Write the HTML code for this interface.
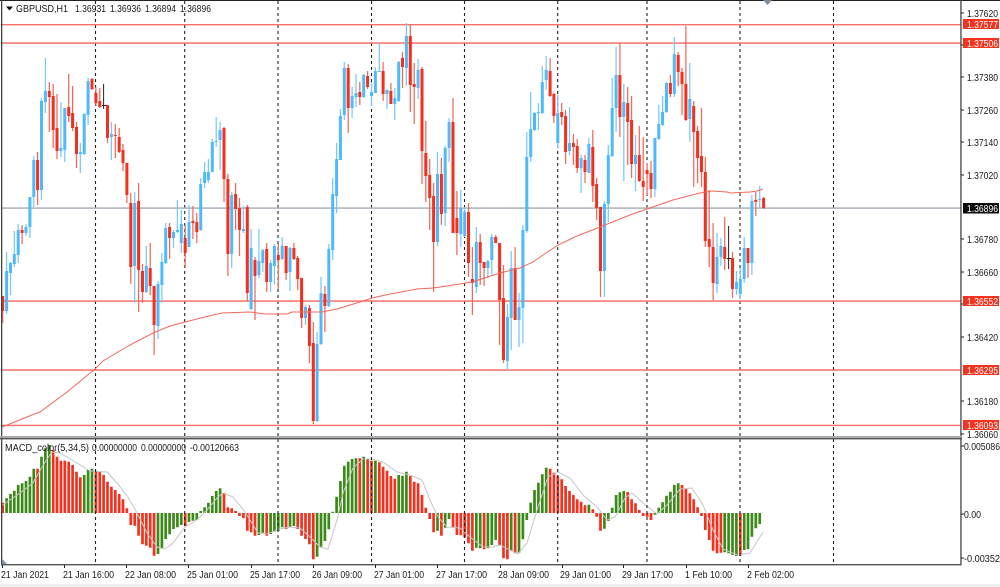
<!DOCTYPE html>
<html>
<head>
<meta charset="utf-8">
<style>
html,body{margin:0;padding:0;background:#fff;width:1000px;height:587px;overflow:hidden}
svg{display:block;position:absolute;left:0;top:0;filter:blur(.3px)}
text{font-family:"Liberation Sans",sans-serif;font-size:10px;fill:#1a1a1a}
.w{fill:#fff}
</style>
</head>
<body>
<svg width="1000" height="587" viewBox="0 0 1000 587" xmlns="http://www.w3.org/2000/svg">
<rect width="1000" height="587" fill="#fff"/>
<rect y="584" width="1000" height="3" fill="#efefef"/>

<!-- MACD bars -->
<path fill="none" stroke="#3b8a18" stroke-width="2.7" d="M6.6 513V498.3M10.5 513V494M14.3 513V490.7M18.2 513V485M22.1 513V483.3M26 513V481M29.9 513V476.7M33.8 513V468.7M41.5 513V456.7M45.4 513V448.3M49.3 513V445M84.2 513V475M88.1 513V470M92 513V468.7M158 513V554M161.9 513V548.7M165.7 513V539M169.6 513V534.3M173.5 513V529M177.4 513V527.3M181.3 513V525M189 513V522M192.9 513V520.7M196.8 513V520M200.7 513V511M204.6 513V507.3M208.4 513V502.7M212.3 513V496M216.2 513V491M220.1 513V488.3M258.9 513V535M262.8 513V532.7M270.6 513V534M274.4 513V531.7M278.3 513V531M282.2 513V527.3M290 513V526.7M293.9 513V526M317.1 513V556.7M321 513V546.7M324.9 513V541M328.8 513V529.3M332.7 513V511.7M336.6 513V496.7M340.4 513V481M344.3 513V465.7M348.2 513V461.7M352.1 513V459M356 513V458.3M363.7 513V456.7M375.4 513V460.7M398.7 513V475M402.5 513V475.7M406.4 513V471.7M437.5 513V530.7M445.2 513V527.7M449.1 513V519M476.3 513V547.7M480.2 513V548.3M487.9 513V548.3M491.8 513V545M495.7 513V540M511.2 513V550.7M519 513V552.7M522.9 513V539.3M526.8 513V520M530.7 513V502.7M534.5 513V490M538.4 513V482.7M542.3 513V474.3M546.2 513V467.7M588.9 513V504.7M604.4 513V528.7M608.3 513V521M612.2 513V507.7M616.1 513V495M619.9 513V492.3M623.8 513V491M654.9 513V514.7M658.8 513V507.7M662.6 513V502.3M666.5 513V495.7M670.4 513V491.7M674.3 513V485M678.2 513V483.3M724.7 513V552.3M728.6 513V553.3M732.5 513V555M736.4 513V556M744.2 513V550M748 513V549.3M751.9 513V536.7M755.8 513V528.3M759.7 513V524"/>
<path fill="none" stroke="#f5301c" stroke-width="2.7" d="M2.7 513V502.7M37.6 513V468.7M53.2 513V450M57 513V456.7M60.9 513V460.7M64.8 513V460.7M68.7 513V461.7M72.6 513V465M76.5 513V471.7M80.3 513V477.3M95.9 513V470.7M99.8 513V471.7M103.6 513V475M107.5 513V481.7M111.4 513V486.7M115.3 513V490M119.2 513V494M123 513V499.3M126.9 513V508.3M130.8 513V525M134.7 513V525.7M138.6 513V535.7M142.5 513V544.3M146.3 513V545.7M150.2 513V547.7M154.1 513V555.7M185.2 513V526M224 513V492.7M227.9 513V507.3M231.7 513V508.3M235.6 513V511M239.5 513V516M243.4 513V518.3M247.3 513V530.7M251.1 513V532.3M255 513V535.7M266.7 513V535.7M286.1 513V529M297.7 513V529M301.6 513V535.7M305.5 513V539M309.4 513V544.3M313.3 513V559.3M359.8 513V458.3M367.6 513V459M371.5 513V460.7M379.3 513V462.3M383.1 513V466.7M387 513V470.7M390.9 513V476M394.8 513V478.7M410.3 513V476M414.2 513V481.7M418.1 513V483.3M422 513V495M425.8 513V507.7M429.7 513V519M433.6 513V532.3M441.4 513V535.7M453 513V527.7M456.9 513V535M460.8 513V535.3M464.7 513V537.3M468.5 513V543.3M472.4 513V550.7M484.1 513V549.3M499.6 513V545M503.5 513V558.3M507.4 513V559.3M515.1 513V553.3M550.1 513V468.7M553.9 513V472.7M557.8 513V475.7M561.7 513V479.3M565.6 513V486M569.5 513V491M573.4 513V495M577.2 513V499.3M581.1 513V501.7M585 513V505.3M592.8 513V509.3M596.6 513V516.7M600.5 513V530.7M627.7 513V492M631.6 513V499.3M635.5 513V503.3M639.3 513V510M643.2 513V516M647.1 513V516.7M651 513V520M682 513V485M685.9 513V489M689.8 513V493.3M693.7 513V499.3M697.6 513V507.3M701.5 513V516M705.3 513V530M709.2 513V540M713.1 513V550.7M717 513V553.3M720.9 513V552.7M740.3 513V555.7"/>
<path fill="none" stroke="#c6c6c6" stroke-width="1" d="M2.7 505L20 493L33 483L45 462L52 452L60 453L77 463L90 471L107 472L117 483L128 497L137 513L147 533L157 547L165 549L173 543L185 527L197 520L207 510L217 498L223 493L233 497L245 512L250 520L258 533L267 534L280 529L290 527L300 528L310 537L320 547L328 549L337 520L343 493L353 468L363 459L372 459L383 462L397 472L410 475L422 480L430 500L438 517L447 527L460 528L470 537L483 547L492 547L500 545L518 554L527 543L538 507L548 477L558 472L570 478L583 495L597 507L607 520L615 517L625 498L632 493L643 503L657 514L667 505L680 489L692 488L703 505L713 530L723 549L737 555L750 553L763 532"/>

<!-- vertical separators -->
<path fill="none" stroke="#222" stroke-width="1.1" stroke-dasharray="3 3" d="M95.5 1V565M184.7 1V565M278 1V565M371.5 1V565M464.5 1V565M557.7 1V565M647 1V565M740 1V565M833.5 1V565"/>

<!-- horizontal lines -->
<rect x="2" y="207.3" width="959" height="1.6" fill="#aeb6bf"/>
<g fill="#f9706a">
<rect x="2" y="24" width="959" height="1.4"/>
<rect x="2" y="42.3" width="959" height="1.5"/>
<rect x="2" y="300.3" width="959" height="1.5"/>
<rect x="2" y="369.3" width="959" height="1.5"/>
<rect x="2" y="424.7" width="959" height="1.4"/>
</g>

<!-- candle wicks -->
<path fill="none" stroke="#78c8fb" stroke-width="1.25" d="M6.6 252V314M10.5 262V295M14.3 231V267M18.2 224V263M26 224V236M29.9 197V238M33.8 156V207M41.5 98V200M45.4 58V113M60.9 102V157M64.8 108V162M80.3 143V173M84.2 113V155M88.1 78V125M111.4 122V160M134.7 192V303M146.3 246V293M158 281V339M161.9 253V303M165.7 223V264M173.5 230V248M177.4 200V233M181.3 210V253M189 205V247M200.7 178V231M204.6 162V188M208.4 159V183M212.3 139V172M216.2 117V147M220.1 122V170M231.7 192V268M243.4 206V233M251.1 229V310M258.9 229V278M262.8 249V272M270.6 260V292M274.4 244V285M282.2 237V260M290 247V291M305.5 305V325M317.1 332V422M321 277V345M328.8 244V307M332.7 178V260M336.6 143V213M340.4 109V160M344.3 62V120M352.1 87V118M356 74V107M363.7 74V98M371.5 82V106M375.4 67V93M379.3 43V72M387 89V109M394.8 88V120M398.7 61V102M406.4 23V86M418.1 59V99M437.5 152V246M445.2 146V226M449.1 118V162M460.8 190V247M464.7 207V237M476.3 227V293M487.9 260V278M491.8 234V275M507.4 304V370M511.2 251V350M519 293V347M522.9 225V343M526.8 132V233M530.7 92V162M534.5 112V131M538.4 103V130M542.3 66V114M546.2 56V90M557.8 95V148M569.5 107V155M581.1 155V193M588.9 138V173M604.4 201V297M608.3 145V222M612.2 78V157M616.1 47V132M623.8 84V181M635.5 135V191M654.9 138V197M658.8 105V140M662.6 96V126M666.5 82V113M674.3 37V97M689.8 63V142M717 233V293M720.9 238V266M736.4 271V295M740.3 268V299M744.2 237V283M751.9 195V275M759.7 186V208"/>
<path fill="none" stroke="#f4685a" stroke-width="1.25" d="M2.7 296V323M22.1 225V244M37.6 152V205M49.3 82V132M53.2 84V148M57 94V159M68.7 74V122M72.6 86V131M76.5 122V168M92 78V90M95.9 87V106M99.8 88V108M107.5 105V143M115.3 124V158M119.2 128V153M123 144V171M126.9 163V203M130.8 193V284M138.6 183V312M142.5 264V303M150.2 243V295M154.1 286V355M169.6 223V259M185.2 225V268M192.9 206V239M196.8 213V243M224 127V202M227.9 174V276M235.6 183V230M239.5 198V256M247.3 205V301M255 257V320M266.7 243V292M278.3 244V289M286.1 246V280M293.9 243V260M297.7 256V290M301.6 278V328M309.4 305V363M313.3 322V424M324.9 286V332M348.2 64V133M359.8 82V105M367.6 71V89M383.1 62V101M390.9 83V104M402.5 52V88M410.3 25V112M414.2 63V124M422 67V184M425.8 121V202M429.7 159V230M433.6 183V292M441.4 158V225M453 98V233M456.9 191V255M468.5 203V277M472.4 247V315M480.2 234V285M484.1 262V286M495.7 235V243M499.6 243V345M503.5 265V363M515.1 247V320M550.1 58V97M553.9 93V123M561.7 103V125M565.6 110V164M573.4 134V165M577.2 139V173M585 155V183M592.8 130V202M596.6 178V220M600.5 207V297M619.9 43V137M627.7 87V165M631.6 96V178M639.3 126V182M643.2 137V201M647.1 163V195M651 161V198M670.4 75V97M678.2 52V86M682 68V115M685.9 26V121M693.7 101V187M697.6 126V183M701.5 108V187M705.3 157V247M709.2 190V267M713.1 223V300M724.7 217V270M732.5 252V298M748 248V278M755.8 192V216M763.6 197V209"/>
<path fill="none" stroke="#222" stroke-width="1" d="M103.6 84V109M102 105.5H106M728.6 226V269M727 258.5H731"/>

<!-- candle bodies -->
<path fill="none" stroke="#4fb9fb" stroke-width="3" d="M6.6 271V311M10.5 263V273M14.3 254V264M18.2 230V255M26 227V233M29.9 197V227M33.8 160V197M41.5 101V190M45.4 91V102M60.9 148V151M64.8 108V150M80.3 152V154M84.2 114V154M88.1 81V115M111.4 134V137M134.7 203V266M146.3 266V292M158 284V326M161.9 262V285M165.7 228V263M173.5 232V238M177.4 230V232M181.3 224V243M189 222V247M200.7 184V230M204.6 172V183M208.4 172V180M212.3 142V172M216.2 141V142M220.1 130V140M231.7 195V254M243.4 229V231M251.1 248V309M258.9 261V275M262.8 250V263M270.6 263V282M274.4 246V266M282.2 246V259M290 248V272M305.5 307V318M317.1 344V421M321 293V344M328.8 249V306M332.7 194V250M336.6 159V196M340.4 116V160M344.3 68V115M352.1 96V108M356 93V97M363.7 75V97M371.5 92V96M375.4 71V93M379.3 71V72M387 90V94M394.8 98V104M398.7 62V101M406.4 36V68M418.1 70V88M437.5 174V242M445.2 148V213M449.1 122V148M460.8 208V234M464.7 212V236M476.3 242V287M487.9 261V268M491.8 237V260M507.4 317V361M511.2 268V318M519 307V320M522.9 230V308M526.8 157V231M530.7 129V157M534.5 113V130M538.4 112V113M542.3 82V113M546.2 70V80M557.8 113V143M569.5 143V151M581.1 158V168M588.9 144V173M604.4 204V271M608.3 155V204M612.2 108V156M616.1 75V108M623.8 102V117M635.5 155V164M654.9 138V189M658.8 124V139M662.6 112V125M666.5 83V112M674.3 54V94M689.8 99V119M717 257V284M720.9 246V257M736.4 282V289M740.3 279V294M744.2 248V279M751.9 201V263M759.7 199V200"/>
<path fill="none" stroke="#f3301e" stroke-width="3" d="M2.7 296V311M22.1 230V233M37.6 160V190M49.3 91V97M53.2 96V130M57 128V151M68.7 107V116M72.6 113V128M76.5 127V154M92 79V89M95.9 93V103M99.8 101V107M107.5 105V138M115.3 135V136M119.2 137V152M123 150V163M126.9 163V195M130.8 203V267M138.6 201V270M142.5 271V292M150.2 268V286M154.1 286V325M169.6 227V238M185.2 238V253M192.9 221V223M196.8 222V232M224 128V179M227.9 179V254M235.6 194V209M239.5 208V230M247.3 207V293M255 260V276M266.7 249V282M278.3 255V260M286.1 246V273M293.9 248V259M297.7 258V279M301.6 278V318M309.4 308V346M313.3 343V421M324.9 294V306M348.2 68V108M359.8 92V97M367.6 76V87M383.1 71V94M390.9 91V104M402.5 58V67M410.3 36V85M414.2 84V87M422 69V151M425.8 153V176M429.7 175V198M433.6 196V242M441.4 174V214M453 122V233M456.9 218V233M468.5 212V263M472.4 279V283M480.2 242V263M484.1 262V268M495.7 237V243M499.6 243V300M503.5 298V360M515.1 268V320M550.1 71V96M553.9 94V116M561.7 112V117M565.6 116V152M573.4 143V147M577.2 146V168M585 160V172M592.8 147V186M596.6 184V208M600.5 207V271M619.9 75V117M627.7 103V122M631.6 120V164M639.3 155V181M643.2 181V187M647.1 170V174M651 173V189M670.4 83V94M678.2 55V72M682 72V84M685.9 84V120M693.7 106V132M697.6 131V158M701.5 156V172M705.3 172V241M709.2 239V247M713.1 247V283M724.7 247V259M732.5 258V289M748 248V263M755.8 200V202M763.6 198V208"/>

<!-- moving average -->
<path fill="none" stroke="#f4675c" stroke-width="1" d="M2 427L37 413L40 412L67 392L95 369L103 361L128 346L153 333L170 326L185 322L213 315L222 313L250 312L265 314L287 314L292 312L322 312L337 309L360 302L372 298L390 294L417 289L433 288L447 286L472 282L497 274L500 273L520 268L533 262L543 255L558 245L577 236L600 227L630 215L647 209L673 200L700 193L712 191L727 192L730 193L750 192L757 191L763 189"/>

<!-- frame -->
<rect x="0" y="0" width="1000" height="1" fill="#222"/>
<rect x="1" y="0" width="1.3" height="565" fill="#444"/>
<rect x="960.3" y="0" width="1.3" height="565" fill="#444"/>
<rect x="0" y="436" width="962" height="1.6" fill="#aaa"/>
<rect x="0" y="437.8" width="962" height="1.6" fill="#555"/>
<rect x="1" y="564" width="960.6" height="1.4" fill="#555"/>
<path fill="#8496aa" d="M2.3 559L7 564H2.3Z"/>
<path fill="#7d8a98" d="M763 0H772L767.5 5Z"/>

<!-- axis ticks -->
<path fill="none" stroke="#222" stroke-width="1" d="M961 13H964M961 45H964M961 77H964M961 110H964M961 142H964M961 175H964M961 239H964M961 272H964M961 304H964M961 337H964M961 401H964M961 434H964M961 446H964M961 514H964M961 558H964M2.5 565V568M64.5 565V568M126.5 565V568M188.5 565V568M251.5 565V568M313.5 565V568M375.5 565V568M437.5 565V568M500.5 565V568M562.5 565V568M623.5 565V568M686.5 565V568M748.5 565V568"/>

<!-- header -->
<path fill="#111" d="M6 6.5H13L9.5 10.5Z"/>
<text x="16" y="12" textLength="52" lengthAdjust="spacingAndGlyphs">GBPUSD,H1</text>
<text x="75" y="12" textLength="31" lengthAdjust="spacingAndGlyphs">1.36931</text>
<text x="110" y="12" textLength="31" lengthAdjust="spacingAndGlyphs">1.36936</text>
<text x="145" y="12" textLength="31" lengthAdjust="spacingAndGlyphs">1.36894</text>
<text x="180" y="12" textLength="31" lengthAdjust="spacingAndGlyphs">1.36896</text>

<!-- price axis -->
<g>
<text x="967" y="17" textLength="31" lengthAdjust="spacingAndGlyphs">1.37620</text>
<text x="967" y="81" textLength="31" lengthAdjust="spacingAndGlyphs">1.37380</text>
<text x="967" y="114" textLength="31" lengthAdjust="spacingAndGlyphs">1.37260</text>
<text x="967" y="146" textLength="31" lengthAdjust="spacingAndGlyphs">1.37140</text>
<text x="967" y="179" textLength="31" lengthAdjust="spacingAndGlyphs">1.37020</text>
<text x="967" y="243" textLength="31" lengthAdjust="spacingAndGlyphs">1.36780</text>
<text x="967" y="276" textLength="31" lengthAdjust="spacingAndGlyphs">1.36660</text>
<text x="967" y="341" textLength="31" lengthAdjust="spacingAndGlyphs">1.36420</text>
<text x="967" y="405" textLength="31" lengthAdjust="spacingAndGlyphs">1.36180</text>
<text x="967" y="438" textLength="31" lengthAdjust="spacingAndGlyphs">1.36060</text>
</g>
<g fill="#f3321f">
<rect x="963" y="19" width="36" height="10"/>
<rect x="963" y="38" width="36" height="10"/>
<rect x="963" y="296" width="36" height="10"/>
<rect x="963" y="365" width="36" height="10"/>
<rect x="963" y="420" width="36" height="10"/>
</g>
<rect x="963" y="203" width="36" height="10.5" fill="#0c0c0c"/>
<g>
<text class="w" x="967" y="28" textLength="31" lengthAdjust="spacingAndGlyphs">1.37577</text>
<text class="w" x="967" y="47" textLength="31" lengthAdjust="spacingAndGlyphs">1.37506</text>
<text class="w" x="967" y="212" textLength="31" lengthAdjust="spacingAndGlyphs">1.36896</text>
<text class="w" x="967" y="305" textLength="31" lengthAdjust="spacingAndGlyphs">1.36552</text>
<text class="w" x="967" y="374" textLength="31" lengthAdjust="spacingAndGlyphs">1.36295</text>
<text class="w" x="967" y="429" textLength="31" lengthAdjust="spacingAndGlyphs">1.36093</text>
</g>

<!-- MACD labels -->
<text x="5" y="451" textLength="84" lengthAdjust="spacingAndGlyphs">MACD_color(5,34,5)</text>
<text x="92" y="451" textLength="45" lengthAdjust="spacingAndGlyphs">0.00000000</text>
<text x="141" y="451" textLength="45" lengthAdjust="spacingAndGlyphs">0.00000000</text>
<text x="190" y="451" textLength="49" lengthAdjust="spacingAndGlyphs">-0.00120663</text>
<text x="964" y="450" textLength="36" lengthAdjust="spacingAndGlyphs">0.005086</text>
<text x="964" y="518" textLength="17" lengthAdjust="spacingAndGlyphs">0.00</text>
<text x="964" y="562" textLength="36" lengthAdjust="spacingAndGlyphs">-0.00352</text>

<!-- time axis -->
<text x="1" y="578" textLength="48" lengthAdjust="spacingAndGlyphs">21 Jan 2021</text>
<text x="63" y="578" textLength="51" lengthAdjust="spacingAndGlyphs">21 Jan 16:00</text>
<text x="125" y="578" textLength="51" lengthAdjust="spacingAndGlyphs">22 Jan 08:00</text>
<text x="187" y="578" textLength="51" lengthAdjust="spacingAndGlyphs">25 Jan 01:00</text>
<text x="250" y="578" textLength="50" lengthAdjust="spacingAndGlyphs">25 Jan 17:00</text>
<text x="312" y="578" textLength="50" lengthAdjust="spacingAndGlyphs">26 Jan 09:00</text>
<text x="374" y="578" textLength="50" lengthAdjust="spacingAndGlyphs">27 Jan 01:00</text>
<text x="436" y="578" textLength="51" lengthAdjust="spacingAndGlyphs">27 Jan 17:00</text>
<text x="498" y="578" textLength="51" lengthAdjust="spacingAndGlyphs">28 Jan 09:00</text>
<text x="560" y="578" textLength="51" lengthAdjust="spacingAndGlyphs">29 Jan 01:00</text>
<text x="622" y="578" textLength="51" lengthAdjust="spacingAndGlyphs">29 Jan 17:00</text>
<text x="685" y="578" textLength="47" lengthAdjust="spacingAndGlyphs">1 Feb 10:00</text>
<text x="747" y="578" textLength="47" lengthAdjust="spacingAndGlyphs">2 Feb 02:00</text>
</svg>
</body>
</html>
